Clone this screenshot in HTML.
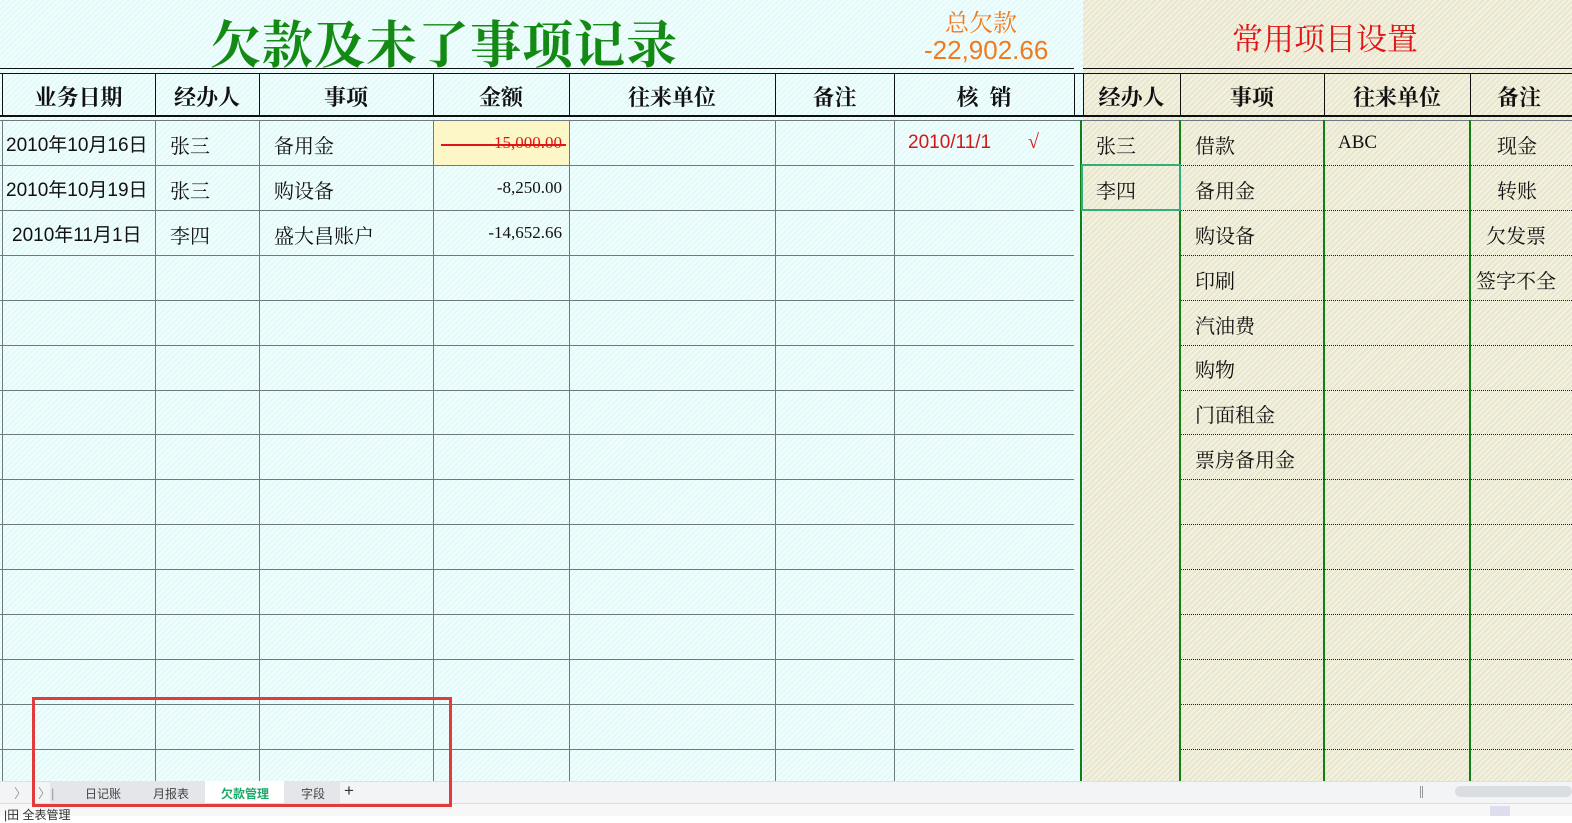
<!DOCTYPE html>
<html><head><meta charset="utf-8"><style>
*{margin:0;padding:0;box-sizing:border-box}
body{width:1572px;height:816px;overflow:hidden;position:relative;background:#fff;font-family:"Liberation Serif","Noto Serif CJK SC",serif}
.cy{position:absolute;background:#e3fafa repeating-linear-gradient(135deg,rgba(255,255,255,.55) 0 2px,rgba(0,0,0,0) 2px 4px)}
.tn{position:absolute;background:#e9e6cc repeating-linear-gradient(135deg,rgba(255,255,255,.45) 0 2px,rgba(0,0,0,0) 2px 4px)}
.l{position:absolute;background:#6d7a80}
.k{position:absolute;background:#111}
.g{position:absolute;background:#137f13}
.d{position:absolute;height:0;border-top:1px dotted #222}
.t{position:absolute;white-space:nowrap;font-size:20px;color:#111}
.h{position:absolute;white-space:nowrap;font-size:22px;font-weight:bold;color:#111;text-align:center;font-family:"Liberation Serif","Noto Serif CJK SC",serif}
.s{font-family:"Liberation Sans","Noto Sans CJK SC",sans-serif}
.r{text-align:right}
</style></head><body>
<div class="cy" style="left:0;top:0;width:1083px;height:781px"></div>
<div class="tn" style="left:1083px;top:0;width:489px;height:781px"></div>
<div class="t" style="left:210px;top:4px;font-size:51px;color:#138a13;font-weight:bold;letter-spacing:1px;font-family:'Liberation Serif','Noto Serif CJK SC',serif">欠款及未了事项记录</div>
<div class="t" style="left:945px;top:3px;font-size:24px;color:#f07a20">总欠款</div>
<div class="t s" style="left:924px;top:35px;font-size:26px;color:#f07a20">-22,902.66</div>
<div class="t" style="left:1232px;top:14px;font-size:31px;color:#e01515">常用项目设置</div>
<div class="k" style="left:0;top:68px;width:1074px;height:1px"></div>
<div class="k" style="left:1083px;top:68px;width:489px;height:1px"></div>
<div class="k" style="left:0;top:73px;width:1572px;height:1px"></div>
<div class="k" style="left:0;top:115px;width:1572px;height:2px"></div>
<div class="l" style="left:0;top:120px;width:1572px;height:1px"></div>
<div class="k" style="left:2px;top:73px;width:1px;height:43px"></div>
<div class="k" style="left:155px;top:73px;width:1px;height:43px"></div>
<div class="k" style="left:259px;top:73px;width:1px;height:43px"></div>
<div class="k" style="left:433px;top:73px;width:1px;height:43px"></div>
<div class="k" style="left:569px;top:73px;width:1px;height:43px"></div>
<div class="k" style="left:775px;top:73px;width:1px;height:43px"></div>
<div class="k" style="left:894px;top:73px;width:1px;height:43px"></div>
<div class="k" style="left:1074px;top:73px;width:1px;height:43px"></div>
<div class="k" style="left:1083px;top:73px;width:1px;height:43px"></div>
<div class="k" style="left:1180px;top:73px;width:1px;height:43px"></div>
<div class="k" style="left:1324px;top:73px;width:1px;height:43px"></div>
<div class="k" style="left:1470px;top:73px;width:1px;height:43px"></div>
<div class="h" style="left:2px;top:81px;width:153px">业务日期</div>
<div class="h" style="left:155px;top:81px;width:104px">经办人</div>
<div class="h" style="left:259px;top:81px;width:174px">事项</div>
<div class="h" style="left:433px;top:81px;width:136px">金额</div>
<div class="h" style="left:569px;top:81px;width:206px">往来单位</div>
<div class="h" style="left:775px;top:81px;width:119px">备注</div>
<div class="h" style="left:894px;top:81px;width:180px">核&nbsp;&nbsp;销</div>
<div class="h" style="left:1083px;top:81px;width:97px">经办人</div>
<div class="h" style="left:1180px;top:81px;width:144px">事项</div>
<div class="h" style="left:1324px;top:81px;width:146px">往来单位</div>
<div class="h" style="left:1470px;top:81px;width:98px">备注</div>
<div class="l" style="left:2px;top:120px;width:1px;height:661px"></div>
<div class="l" style="left:155px;top:120px;width:1px;height:661px"></div>
<div class="l" style="left:259px;top:120px;width:1px;height:661px"></div>
<div class="l" style="left:433px;top:120px;width:1px;height:661px"></div>
<div class="l" style="left:569px;top:120px;width:1px;height:661px"></div>
<div class="l" style="left:775px;top:120px;width:1px;height:661px"></div>
<div class="l" style="left:894px;top:120px;width:1px;height:661px"></div>
<div class="g" style="left:1080px;top:120px;width:2px;height:661px"></div>
<div class="g" style="left:1179px;top:120px;width:2px;height:661px"></div>
<div class="g" style="left:1323px;top:120px;width:2px;height:661px"></div>
<div class="g" style="left:1469px;top:120px;width:2px;height:661px"></div>
<div class="l" style="left:0;top:165px;width:1074px;height:1px"></div><div class="d" style="left:1181px;top:165px;width:391px"></div>
<div class="l" style="left:0;top:210px;width:1074px;height:1px"></div><div class="d" style="left:1181px;top:210px;width:391px"></div>
<div class="l" style="left:0;top:255px;width:1074px;height:1px"></div><div class="d" style="left:1181px;top:255px;width:391px"></div>
<div class="l" style="left:0;top:300px;width:1074px;height:1px"></div><div class="d" style="left:1181px;top:300px;width:391px"></div>
<div class="l" style="left:0;top:345px;width:1074px;height:1px"></div><div class="d" style="left:1181px;top:345px;width:391px"></div>
<div class="l" style="left:0;top:390px;width:1074px;height:1px"></div><div class="d" style="left:1181px;top:390px;width:391px"></div>
<div class="l" style="left:0;top:434px;width:1074px;height:1px"></div><div class="d" style="left:1181px;top:434px;width:391px"></div>
<div class="l" style="left:0;top:479px;width:1074px;height:1px"></div><div class="d" style="left:1181px;top:479px;width:391px"></div>
<div class="l" style="left:0;top:524px;width:1074px;height:1px"></div><div class="d" style="left:1181px;top:524px;width:391px"></div>
<div class="l" style="left:0;top:569px;width:1074px;height:1px"></div><div class="d" style="left:1181px;top:569px;width:391px"></div>
<div class="l" style="left:0;top:614px;width:1074px;height:1px"></div><div class="d" style="left:1181px;top:614px;width:391px"></div>
<div class="l" style="left:0;top:659px;width:1074px;height:1px"></div><div class="d" style="left:1181px;top:659px;width:391px"></div>
<div class="l" style="left:0;top:704px;width:1074px;height:1px"></div><div class="d" style="left:1181px;top:704px;width:391px"></div>
<div class="l" style="left:0;top:749px;width:1074px;height:1px"></div><div class="d" style="left:1181px;top:749px;width:391px"></div>
<div style="position:absolute;left:434px;top:121px;width:135px;height:44px;background:#fdf6c6"></div>
<div style="position:absolute;left:1081px;top:164px;width:100px;height:47px;border:2px solid #2fb07a"></div>
<div class="t s" style="left:6px;top:130px;font-size:19px">2010年10月16日</div>
<div class="t s" style="left:6px;top:175px;font-size:19px">2010年10月19日</div>
<div class="t s" style="left:12px;top:220px;font-size:19px">2010年11月1日</div>
<div class="t" style="left:170px;top:130px">张三</div>
<div class="t" style="left:170px;top:175px">张三</div>
<div class="t" style="left:170px;top:220px">李四</div>
<div class="t" style="left:274px;top:130px">备用金</div>
<div class="t" style="left:274px;top:175px">购设备</div>
<div class="t" style="left:274px;top:220px">盛大昌账户</div>
<div class="t r" style="left:440px;width:122px;top:133px;font-size:17px;color:#e01515">15,000.00</div>
<div style="position:absolute;left:441px;top:144px;width:125px;height:2px;background:#e01515"></div>
<div class="t r" style="left:440px;width:122px;top:178px;font-size:17px">-8,250.00</div>
<div class="t r" style="left:440px;width:122px;top:223px;font-size:17px">-14,652.66</div>
<div class="t s" style="left:908px;top:132px;color:#d01818;font-size:19px">2010/11/1</div>
<div class="t" style="left:1028px;top:131px;color:#d01818;font-size:20px;font-weight:bold">√</div>
<div class="t" style="left:1096px;top:130px">张三</div>
<div class="t" style="left:1096px;top:175px">李四</div>
<div class="t" style="left:1195px;top:130px">借款</div>
<div class="t" style="left:1195px;top:175px">备用金</div>
<div class="t" style="left:1195px;top:220px">购设备</div>
<div class="t" style="left:1195px;top:265px">印刷</div>
<div class="t" style="left:1195px;top:310px">汽油费</div>
<div class="t" style="left:1195px;top:354px">购物</div>
<div class="t" style="left:1195px;top:399px">门面租金</div>
<div class="t" style="left:1195px;top:444px">票房备用金</div>
<div class="t" style="left:1338px;top:132px;font-size:19px">ABC</div>
<div class="t" style="left:1497px;top:130px">现金</div>
<div class="t" style="left:1497px;top:175px">转账</div>
<div class="t" style="left:1486px;top:220px">欠发票</div>
<div class="t" style="left:1476px;top:265px">签字不全</div>
<div style="position:absolute;left:0;top:781px;width:1572px;height:22px;background:#f3f4f6;border-top:1px solid #dde"></div>
<div style="position:absolute;left:50px;top:781px;width:290px;height:22px;background:#e4e6ea"></div>
<div style="position:absolute;left:205px;top:781px;width:79px;height:22px;background:#fff"></div>
<div class="t s" style="left:14px;top:783px;font-size:13px;color:#999">〉</div>
<div class="t s" style="left:38px;top:783px;font-size:13px;color:#999">〉|</div>
<div class="t s" style="left:85px;top:785px;font-size:12px;color:#444">日记账</div>
<div class="t s" style="left:153px;top:785px;font-size:12px;color:#444">月报表</div>
<div class="t s" style="left:221px;top:785px;font-size:12px;color:#1aa86a;font-weight:bold">欠款管理</div>
<div class="t s" style="left:301px;top:785px;font-size:12px;color:#444">字段</div>
<div class="t s" style="left:344px;top:781px;font-size:17px;color:#333">+</div>
<div style="position:absolute;left:1420px;top:786px;width:3px;height:12px;border-left:1px solid #999;border-right:1px solid #999"></div>
<div style="position:absolute;left:1455px;top:786px;width:117px;height:11px;background:#dadde2;border-radius:6px"></div>
<div style="position:absolute;left:0;top:803px;width:1572px;height:13px;background:#f7f7f8;border-top:1px solid #ddd"></div>
<div class="t s" style="left:4px;top:806px;font-size:12px;color:#333">|田 全表管理</div>
<div style="position:absolute;left:1490px;top:806px;width:20px;height:10px;background:#dde"></div>
<div style="position:absolute;left:32px;top:697px;width:420px;height:110px;border:3px solid #e23b3b"></div>
</body></html>
